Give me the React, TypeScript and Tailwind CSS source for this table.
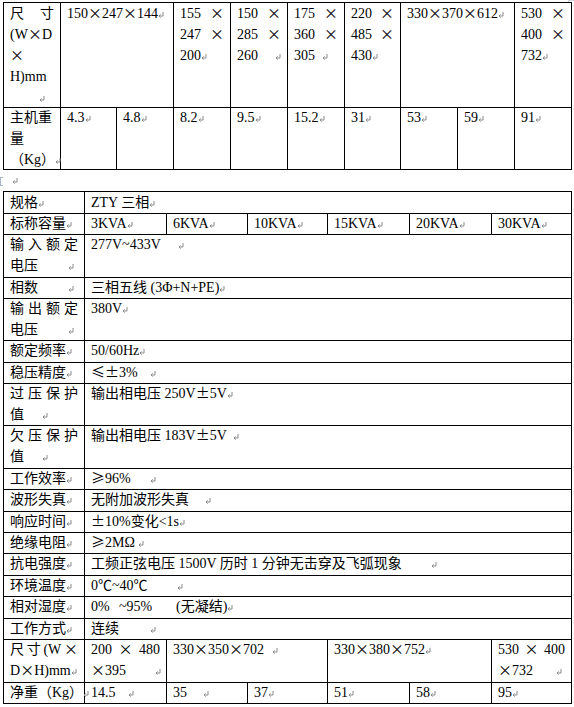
import React from "react";

// paragraph mark, as Word shows it with formatting marks on
const P = ({ className = "" }: { className?: string }) => (
  <svg
    className={`inline-block w-[6px] h-[6px] ${className}`}
    viewBox="0 0 6 6"
    fill="none"
    stroke="#8a8a8a"
    strokeWidth="1"
  >
    <path d="M5 0v4H1M2.6 2.4L1 4l1.6 1.6" />
  </svg>
);

// full width symbol (×, ±, ≤, ≥) the way the CJK font sets it
const W = ({ children }: { children: React.ReactNode }) => (
  <span className="inline-block w-[14px] text-center leading-none font-['Noto_Sans_CJK_SC',sans-serif]">
    {children}
  </span>
);
const X = () => <W>×</W>;

// end of row marker right of the table
const Mark = () => (
  <div className="pt-[10px]">
    <div className="ml-[2px] w-px h-[2px] bg-gray-500" />
  </div>
);

const c = "border-r border-b border-black px-[6px] whitespace-nowrap -mt-px";
const line = "flex justify-between items-baseline";

const Spread = ({ chars }: { chars: string[] }) => (
  <div className={line}>
    {chars.map((ch, i) => (
      <span key={i}>{ch}</span>
    ))}
  </div>
);

export default function App() {
  return (
    <div className="w-[574px] h-[707px] overflow-hidden bg-white text-black text-[14px] leading-[21px] font-['Liberation_Serif','Noto_Sans_CJK_SC',serif]">
      {/* corner handle */}
      <div className="h-[3px] flex justify-end">
        <div className="w-[6px] h-[3px] border-l border-t border-gray-300" />
      </div>

      {/* 尺寸 / 重量 table */}
      <div className="ml-[3px] grid grid-cols-[58px_56px_57px_57px_57px_57px_56px_57px_57px_57px_3px] grid-rows-[105px_62px]">
        <div className={`${c} border-l border-t`}>
          <Spread chars={["尺", "寸"]} />
          <div>
            (W<X />D
          </div>
          <div>
            <X />
          </div>
          <div>H)mm</div>
          <div className="pl-[29px]">
            <P />
          </div>
        </div>
        <div className={`${c} border-t col-span-2`}>
          150<X />247<X />144<P />
        </div>
        <div className={`${c} border-t`}>
          <div className={line}><span>155</span><X /></div>
          <div className={line}><span>247</span><X /></div>
          <div>200<P /></div>
        </div>
        <div className={`${c} border-t`}>
          <div className={line}><span>150</span><X /></div>
          <div className={line}><span>285</span><X /></div>
          <div className={line}><span>260</span><P /></div>
        </div>
        <div className={`${c} border-t`}>
          <div className={line}><span>175</span><X /></div>
          <div className={line}><span>360</span><X /></div>
          <div><span className="inline-block w-[28px]">305</span><P /></div>
        </div>
        <div className={`${c} border-t`}>
          <div className={line}><span>220</span><X /></div>
          <div className={line}><span>485</span><X /></div>
          <div>430<P /></div>
        </div>
        <div className={`${c} border-t col-span-2`}>
          330<X />370<X />612<P />
        </div>
        <div className={`${c} border-t`}>
          <div className={line}><span>530</span><X /></div>
          <div className={line}><span>400</span><X /></div>
          <div>732<P /></div>
        </div>
        <Mark />

        <div className={`${c} border-l`}>
          <div>主机重</div>
          <div>量</div>
          <div>（Kg）<P /></div>
        </div>
        {["4.3", "4.8", "8.2", "9.5", "15.2", "31", "53", "59", "91"].map((v) => (
          <div key={v} className={c}>
            {v}
            <P />
          </div>
        ))}
        <Mark />
      </div>

      {/* empty paragraph between the tables */}
      <div className="h-[22px] flex items-center">
        <div className="w-[3px] h-[9px] border-l border-t border-b border-[#a9b8cc]" />
        <div className="ml-[9px] -mt-[2px]">
          <P />
        </div>
      </div>

      {/* ZTY 三相 spec table */}
      <div className="ml-[3px] grid grid-cols-[82px_82px_81px_80px_82px_82px_80px_3px] grid-rows-[22px_21px_43px_21px_42px_22px_21px_42px_43px_21px_22px_21px_21px_22px_21px_22px_21px_43px_21px]">
        {/* 规格 */}
        <div className={`${c} border-l border-t`}>
          规格<P />
        </div>
        <div className={`${c} border-t col-span-6`}>
          ZTY 三相<P />
        </div>
        <Mark />

        {/* 标称容量 */}
        <div className={`${c} border-l`}>
          标称容量<P />
        </div>
        {["3KVA", "6KVA", "10KVA", "15KVA", "20KVA", "30KVA"].map((v) => (
          <div key={v} className={c}>
            {v}
            <P />
          </div>
        ))}
        <Mark />

        {/* 输入额定电压 */}
        <div className={`${c} border-l`}>
          <Spread chars={["输", "入", "额", "定"]} />
          <div>
            <span className="inline-block w-[58px]">电压</span>
            <P />
          </div>
        </div>
        <div className={`${c} col-span-6`}>
          <span className="inline-block w-[87px]">277V~433V</span>
          <P />
        </div>
        <Mark />

        {/* 相数 */}
        <div className={`${c} border-l`}>
          <span className="inline-block w-[58px]">相数</span>
          <P />
        </div>
        <div className={`${c} col-span-6`}>
          三相五线 (3Φ+N+PE)<P />
        </div>
        <Mark />

        {/* 输出额定电压 */}
        <div className={`${c} border-l`}>
          <Spread chars={["输", "出", "额", "定"]} />
          <div>
            <span className="inline-block w-[58px]">电压</span>
            <P />
          </div>
        </div>
        <div className={`${c} col-span-6`}>
          380V<P />
        </div>
        <Mark />

        {/* 额定频率 */}
        <div className={`${c} border-l`}>
          额定频率<P />
        </div>
        <div className={`${c} col-span-6`}>
          50/60Hz<P />
        </div>
        <Mark />

        {/* 稳压精度 */}
        <div className={`${c} border-l`}>
          稳压精度<P />
        </div>
        <div className={`${c} col-span-6`}>
          <span className="inline-block w-[59px]">
            <W>≤</W>
            <W>±</W>3%
          </span>
          <P />
        </div>
        <Mark />

        {/* 过压保护值 */}
        <div className={`${c} border-l`}>
          <Spread chars={["过", "压", "保", "护"]} />
          <div>
            <span className="inline-block w-[32px]">值</span>
            <P />
          </div>
        </div>
        <div className={`${c} col-span-6`}>
          输出相电压 250V<W>±</W>5V<P />
        </div>
        <Mark />

        {/* 欠压保护值 */}
        <div className={`${c} border-l`}>
          <Spread chars={["欠", "压", "保", "护"]} />
          <div>
            <span className="inline-block w-[32px]">值</span>
            <P />
          </div>
        </div>
        <div className={`${c} col-span-6`}>
          <span className="inline-block w-[142px]">
            输出相电压 183V<W>±</W>5V
          </span>
          <P />
        </div>
        <Mark />

        {/* 工作效率 */}
        <div className={`${c} border-l`}>
          工作效率<P />
        </div>
        <div className={`${c} col-span-6`}>
          <span className="inline-block w-[59px]">
            <W>≥</W>96%
          </span>
          <P />
        </div>
        <Mark />

        {/* 波形失真 */}
        <div className={`${c} border-l`}>
          波形失真<P />
        </div>
        <div className={`${c} col-span-6`}>
          <span className="inline-block w-[114px]">无附加波形失真</span>
          <P />
        </div>
        <Mark />

        {/* 响应时间 */}
        <div className={`${c} border-l`}>
          响应时间<P />
        </div>
        <div className={`${c} col-span-6`}>
          <W>±</W>10%变化&lt;1s<P />
        </div>
        <Mark />

        {/* 绝缘电阻 */}
        <div className={`${c} border-l`}>
          绝缘电阻<P />
        </div>
        <div className={`${c} col-span-6`}>
          <W>≥</W>2MΩ <P />
        </div>
        <Mark />

        {/* 抗电强度 */}
        <div className={`${c} border-l`}>
          抗电强度<P />
        </div>
        <div className={`${c} col-span-6`}>
          <span className="inline-block w-[340px]">
            工频正弦电压 1500V 历时 1 分钟无击穿及飞弧现象
          </span>
          <P />
        </div>
        <Mark />

        {/* 环境温度 */}
        <div className={`${c} border-l`}>
          环境温度<P />
        </div>
        <div className={`${c} col-span-6`}>
          <span className="inline-block w-[86px]">0℃~40℃</span>
          <P />
        </div>
        <Mark />

        {/* 相对湿度 */}
        <div className={`${c} border-l`}>
          相对湿度<P />
        </div>
        <div className={`${c} col-span-6`}>
          <span className="inline-block w-[28px]">0%</span>
          <span className="inline-block w-[57px]">~95%</span>
          (无凝结)<P />
        </div>
        <Mark />

        {/* 工作方式 */}
        <div className={`${c} border-l`}>
          工作方式<P />
        </div>
        <div className={`${c} col-span-6`}>
          <span className="inline-block w-[59px]">连续</span>
          <P />
        </div>
        <Mark />

        {/* 尺寸 */}
        <div className={`${c} border-l`}>
          <div className={line}>
            <span>尺</span>
            <span>寸</span>
            <span>(W</span>
            <X />
          </div>
          <div>
            D<X />H)mm<P />
          </div>
        </div>
        <div className={c}>
          <div className={line}>
            <span>200</span>
            <X />
            <span>480</span>
          </div>
          <div>
            <span className="inline-block w-[64px]">
              <X />395
            </span>
            <P />
          </div>
        </div>
        <div className={`${c} col-span-2`}>
          <span className="inline-block w-[99px]">
            330<X />350<X />702
          </span>
          <P />
        </div>
        <div className={`${c} col-span-2`}>
          330<X />380<X />752<P />
        </div>
        <div className={c}>
          <div className={line}>
            <span>530</span>
            <X />
            <span>400</span>
          </div>
          <div>
            <span className="inline-block w-[58px]">
              <X />732
            </span>
            <P />
          </div>
        </div>
        <Mark />

        {/* 净重 */}
        <div className={`${c} border-l`}>
          净重（Kg）<P />
        </div>
        <div className={c}>
          <span className="inline-block w-[37px]">14.5</span>
          <P />
        </div>
        <div className={c}>
          <span className="inline-block w-[30px]">35</span>
          <P />
        </div>
        {["37", "51", "58", "95"].map((v) => (
          <div key={v} className={c}>
            {v}
            <P />
          </div>
        ))}
        <Mark />
      </div>
    </div>
  );
}
